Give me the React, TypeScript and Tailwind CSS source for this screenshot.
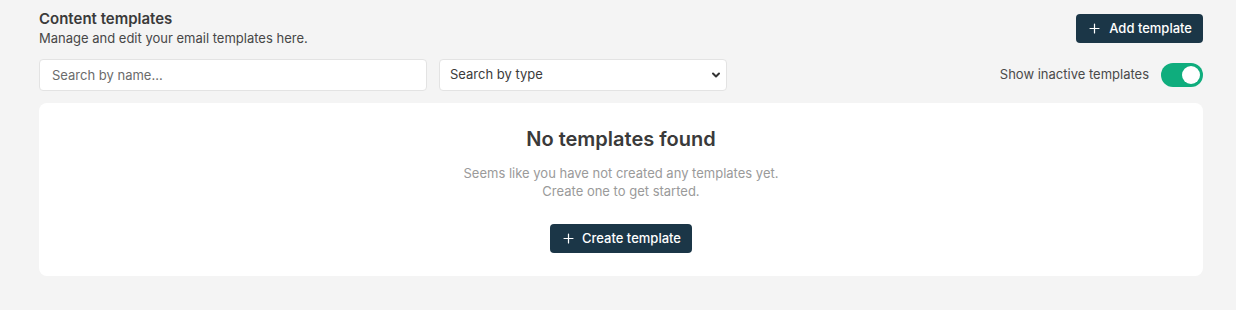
import React, { useState } from 'react';

function PlusIcon({ className }: { className?: string }) {
  return (
    <svg className={className} viewBox="0 0 16 16" fill="none" stroke="currentColor" strokeWidth="1.5" strokeLinecap="round">
      <path d="M8 2.5v11M2.5 8h11" />
    </svg>
  );
}

export default function App() {
  const [showInactive, setShowInactive] = useState(true);

  return (
    <div className="min-h-[310px] bg-[#f4f4f4] pl-[39px] pr-[33px] pt-[9px] pb-[34px] font-['Inter','Noto_Sans',sans-serif] text-[#3b3b3b]">
      <div className="flex items-center justify-between">
        <div>
          <h1 className="text-[15px] leading-[20px] font-semibold text-[#3a3a3a]">Content templates</h1>
          <p className="text-[13px] leading-[19px] text-[#474747]">Manage and edit your email templates here.</p>
        </div>
        <button className="flex h-[29px] items-center gap-[8px] rounded-[4px] bg-[#1b3647] pl-[12px] pr-[11px] text-[13px] font-medium text-white">
          <PlusIcon className="h-[13px] w-[13px]" />
          Add template
        </button>
      </div>

      <div className="mt-[11px] flex items-center">
        <input
          type="text"
          placeholder="Search by name..."
          className="h-[32px] w-[388px] rounded-[4px] border border-[#e3e3e3] bg-white px-[12px] text-[13px] text-[#333] placeholder:text-[#6b6b6b] outline-none"
        />
        <div className="relative ml-[12px]">
          <select className="h-[32px] w-[288px] appearance-none rounded-[4px] border border-[#e3e3e3] bg-white px-[10px] text-[13px] text-[#3b3b3b] outline-none">
            <option>Search by type</option>
          </select>
          <svg className="pointer-events-none absolute right-[6px] top-[11px] h-[10px] w-[10px] text-[#333]" viewBox="0 0 10 10" fill="none" stroke="currentColor" strokeWidth="2" strokeLinecap="round" strokeLinejoin="round">
            <path d="M2 3.5 5 6.5 8 3.5" />
          </svg>
        </div>
        <div className="ml-auto flex items-center gap-[12px]">
          <span className="text-[13px] text-[#4a4a4a]">Show inactive templates</span>
          <button
            onClick={() => setShowInactive(!showInactive)}
            className={`flex h-[24px] w-[42px] items-center rounded-full p-[3px] ${showInactive ? 'bg-[#0fad7d] justify-end' : 'bg-[#cfcfcf] justify-start'}`}
          >
            <span className="h-[18px] w-[18px] rounded-full bg-white" />
          </button>
        </div>
      </div>

      <div className="mt-[12px] flex flex-col items-center rounded-[8px] bg-white pt-[22px] pb-[23px]">
        <h2 className="text-[20px] leading-[28px] font-semibold text-[#3a3a3a]">No templates found</h2>
        <p className="mt-[11px] text-center text-[13px] leading-[18px] text-[#9a9a9a]">
          Seems like you have not created any templates yet.
          <br />
          Create one to get started.
        </p>
        <button className="mt-[24px] flex h-[29px] items-center gap-[7px] rounded-[4px] bg-[#1b3647] pl-[12px] pr-[11px] text-[13px] font-medium text-white">
          <PlusIcon className="h-[13px] w-[13px]" />
          Create template
        </button>
      </div>
    </div>
  );
}
